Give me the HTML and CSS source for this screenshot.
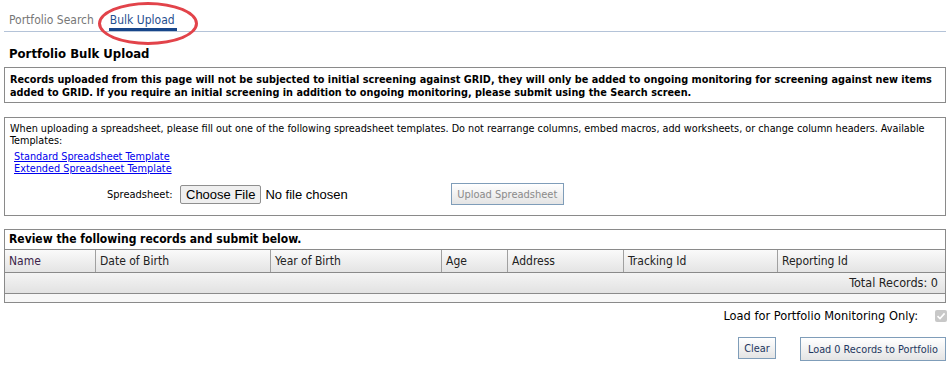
FILE: index.html
```html
<!DOCTYPE html>
<html>
<head>
<meta charset="utf-8">
<link rel="stylesheet" href="styles.css">
</head>
<body>
<div class="page">
  <nav class="tabs">
    <span class="tab">Portfolio Search</span>
    <span class="tab active">Bulk Upload</span>
    <span class="annot"></span>
  </nav>
  <h1 class="title">Portfolio Bulk Upload</h1>
  <div class="box notice">Records uploaded from this page will not be subjected to initial screening against GRID, they will only be added to ongoing monitoring for screening against new items added to GRID. If you require an initial screening in addition to ongoing monitoring, please submit using the Search screen.</div>
  <div class="box upload">
    <p class="intro">When uploading a spreadsheet, please fill out one of the following spreadsheet templates. Do not rearrange columns, embed macros, add worksheets, or change column headers. Available Templates:</p>
    <div class="links">
      <a href="#">Standard Spreadsheet Template</a>
      <a href="#">Extended Spreadsheet Template</a>
    </div>
    <div class="file-row">
      <span class="label">Spreadsheet:</span>
      <span class="file"><span class="filebtn">Choose File</span><span class="nofile">No file chosen</span></span>
      <span class="btn disabled">Upload Spreadsheet</span>
    </div>
  </div>
  <div class="box grid">
    <div class="grid-title">Review the following records and submit below.</div>
    <div class="head">
      <div class="c c1">Name</div>
      <div class="c c2">Date of Birth</div>
      <div class="c c3">Year of Birth</div>
      <div class="c c4">Age</div>
      <div class="c c5">Address</div>
      <div class="c c6">Tracking Id</div>
      <div class="c c7">Reporting Id</div>
    </div>
    <div class="foot">Total Records: 0</div>
    <div class="blank"></div>
  </div>
  <div class="monitor">
    <span>Load for Portfolio Monitoring Only:</span>
    <span class="check"><svg width="10" height="10" viewBox="0 0 10 10"><path d="M1.5 5.2 L4 7.6 L8.6 2.4" fill="none" stroke="#fff" stroke-width="1.6"/></svg></span>
  </div>
  <div class="actions">
    <span class="btn clear">Clear</span>
    <span class="btn">Load 0 Records to Portfolio</span>
  </div>
</div>
</body>
</html>
```
FILE: styles.css
```css
html, body { margin: 0; padding: 0; background: #fff; }
body { font-family: "DejaVu Sans Condensed", "DejaVu Sans", sans-serif; color: #000; }
.page { padding: 0 4px 0 4px; width: 942px; }

.tabs { position: relative; display: flex; height: 31px; border-bottom: 1px solid #b4c3d8; padding-left: 5px; gap: 15px; }
.tab { font-size: 12px; color: #777; line-height: 1; padding-top: 14px; height: 17px; box-sizing: content-box; }
.tab.active { color: #1f4f8f; border-bottom: 3px solid #17468a; height: 14px; padding-left: 1px; padding-right: 2px; }
.annot { position: absolute; left: 94px; top: 2px; width: 94px; height: 37px; border: 3px solid #e2434a; border-radius: 50%; }

.title { font-size: 13px; font-weight: bold; margin: 0; padding: 15px 0 0 5px; height: 20px; line-height: 14px; }

.box { border: 1px solid #8a8a8a; box-sizing: border-box; }
.notice { height: 36px; font-size: 10.8px; font-weight: bold; padding: 5px 4px 0 5px; line-height: 13px; }
.upload { margin-top: 14px; height: 99px; font-size: 10.75px; padding: 5px 4px 0 5px; }
.intro { margin: 0; line-height: 12px; }
.links { display: flex; flex-direction: column; padding: 4px 0 0 4px; line-height: 12px; font-size: 10.8px; }
.links a { color: #0000ee; text-decoration: underline; align-self: flex-start; }
.file-row { display: flex; align-items: center; margin-top: 8px; height: 22px; font-size: 11px; }
.label { margin-left: 97px; width: 73px; }
.file { display: flex; align-items: center; font-family: "Liberation Sans", Arial, sans-serif; font-size: 13px; }
.filebtn { border: 1px solid #8f8f8f; border-radius: 2px; background: #efefef; padding: 1px 5px; height: 15px; line-height: 15px; margin-right: 4px; }
.btn { display: inline-flex; align-items: center; justify-content: center; border: 1px solid #7f9db9; background: linear-gradient(#ffffff, #e4e4e4); color: #1e3760; font-size: 11px; height: 20px; padding: 0 6px; }
.btn.disabled { color: #8a8a8a; margin-left: 103px; width: 111px; padding: 0; }

.grid { margin-top: 13px; }
.grid-title { font-size: 12px; font-weight: bold; height: 19px; line-height: 19px; padding-left: 4px; border-bottom: 1px solid #8a8a8a; }
.head { display: flex; height: 22px; background: linear-gradient(#fafafa, #e4e4e4); border-bottom: 1px solid #8a8a8a; font-size: 12px; color: #222; }
.c { line-height: 22px; padding-left: 4px; border-left: 1px solid #a0a0a0; box-sizing: border-box; }
.c1 { border-left: none; width: 90px; color: #3b1f4a; }
.c2 { width: 175px; }
.c3 { width: 171px; }
.c4 { width: 66px; }
.c5 { width: 116px; }
.c6 { width: 154px; }
.c7 { flex: 1; }
.foot { height: 20px; line-height: 20px; background: linear-gradient(#f4f4f4, #e2e2e2); border-bottom: 1px solid #8a8a8a; text-align: right; padding-right: 7px; font-size: 12.5px; color: #222; }
.blank { height: 8px; background: #f7f7f7; }

.monitor { display: flex; justify-content: flex-end; align-items: center; gap: 17px; margin-top: 6px; height: 13px; font-size: 12.7px; margin-right: -1px; }
.check { width: 12px; height: 12px; background: #c8c8c8; border-radius: 2px; display: inline-flex; align-items: center; justify-content: center; }
.actions { display: flex; justify-content: flex-end; gap: 24px; margin-top: 15px; }
.actions .btn { height: 22px; font-size: 10.8px; padding: 0 7px; }
.actions .btn.clear { width: 38px; padding: 0; box-sizing: border-box; }
```
